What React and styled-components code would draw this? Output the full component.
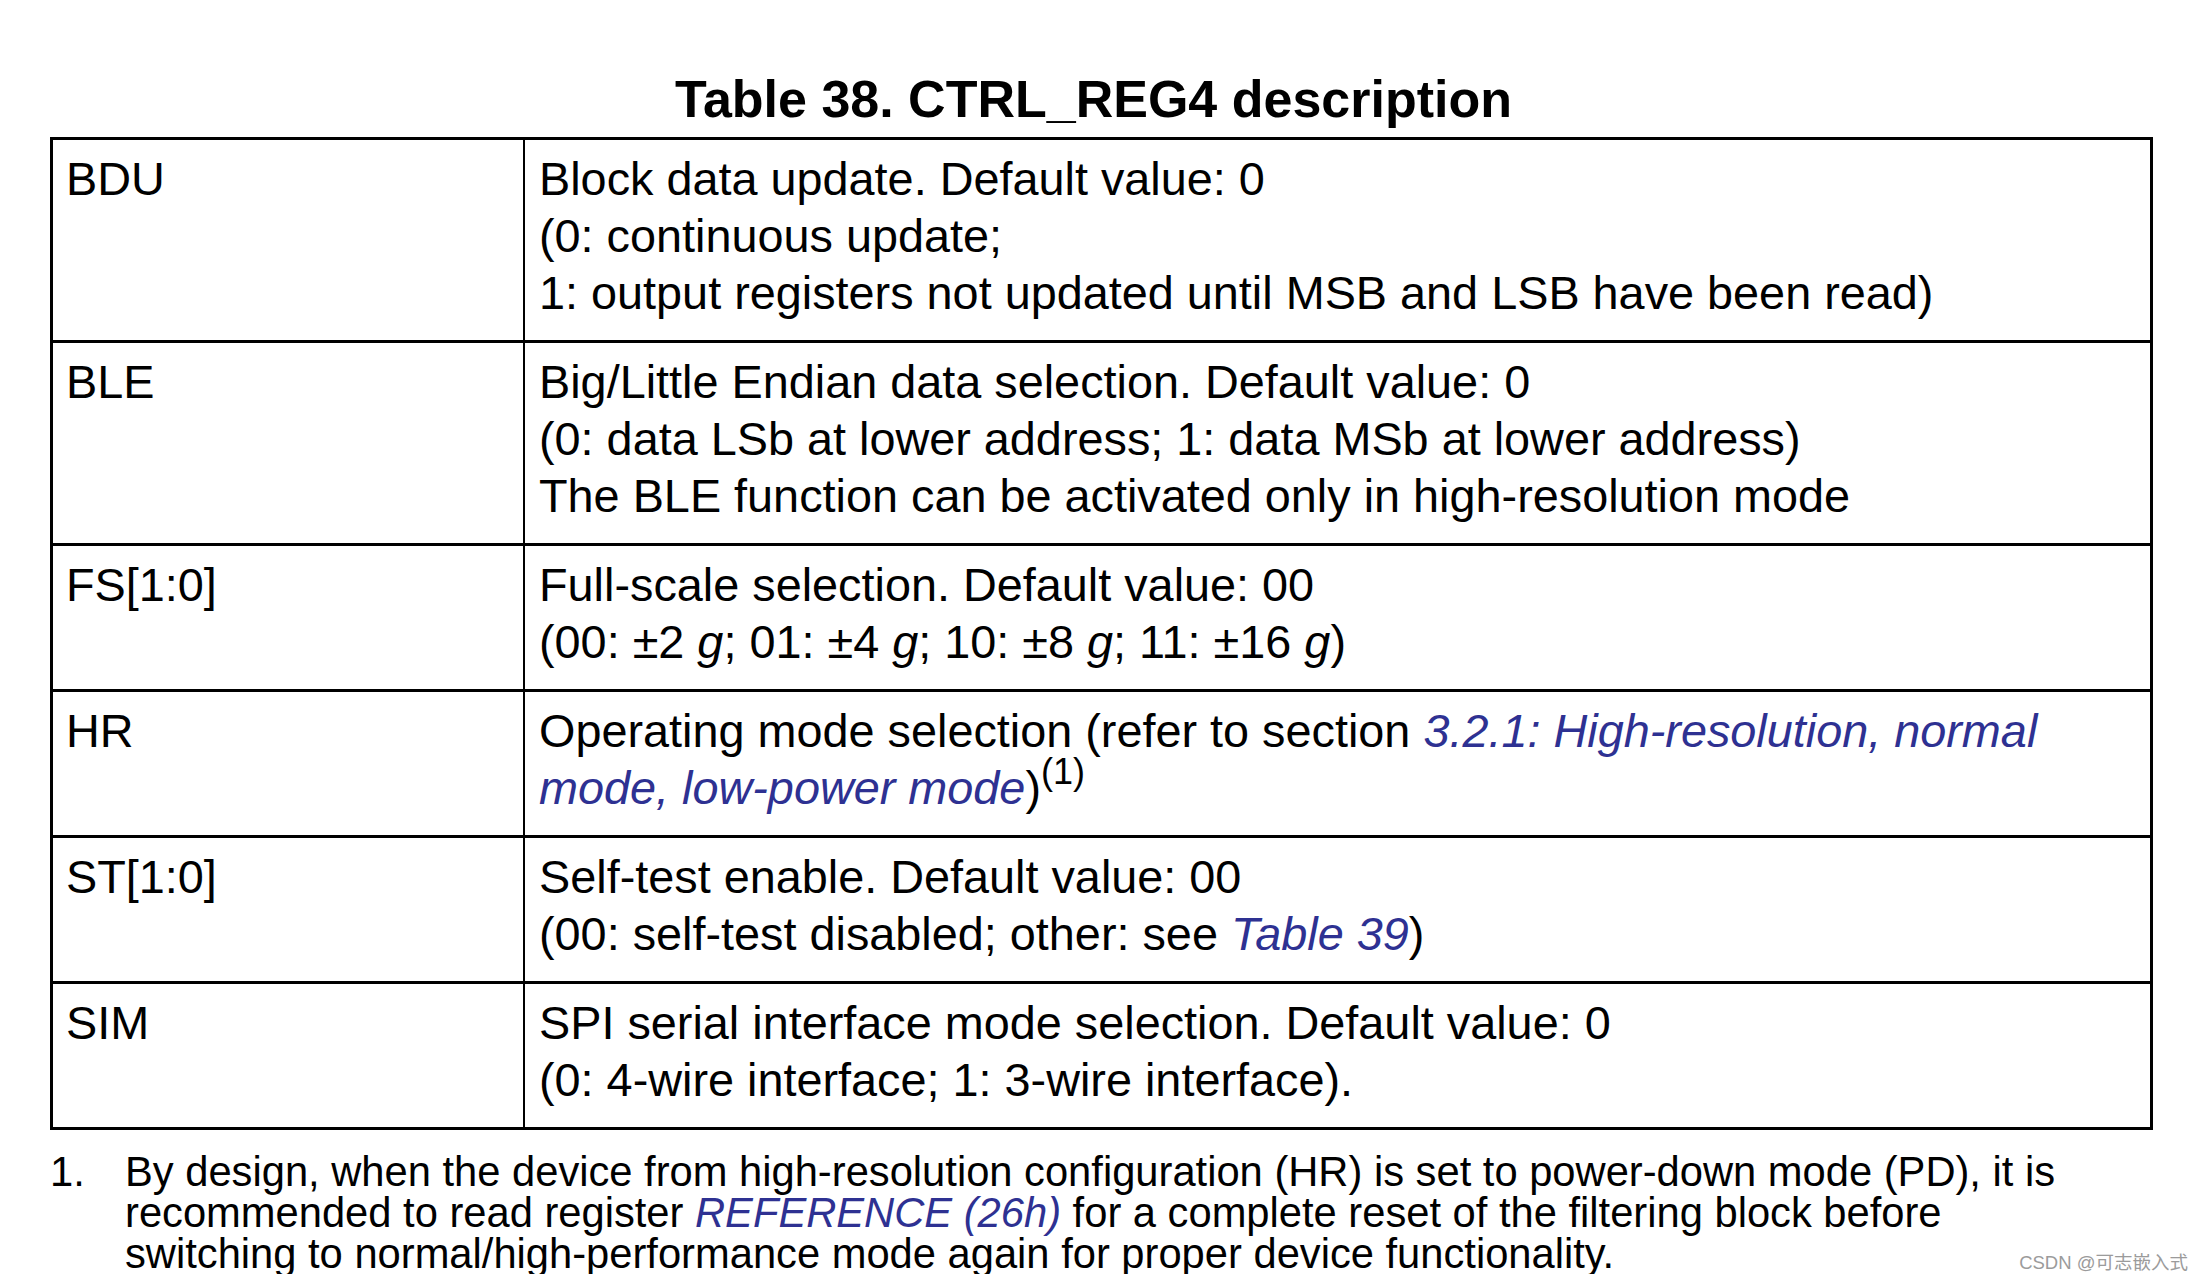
import React from "react";
import styled, { createGlobalStyle } from "styled-components";

const GlobalStyle = createGlobalStyle`
  html, body {
    margin: 0;
    padding: 0;
    background: #ffffff;
  }
  body {
    font-family: "Liberation Sans", Arial, sans-serif;
    color: #000000;
  }
`;

const Page = styled.div`
  width: 2103px;
  padding: 69px 0 0 50px;
`;

const Title = styled.div`
  font-size: 52px;
  font-weight: bold;
  line-height: 60px;
  text-align: center;
  padding-right: 16px;
  margin-bottom: 8px;
`;

const RegTable = styled.table`
  width: 100%;
  table-layout: fixed;
  border-collapse: separate;
  border-spacing: 0;
  border: 3px solid #000;
`;

const Row = styled.tr`
  td {
    border-top: ${(p) => (p.$first ? "none" : "3px solid #000")};
  }
`;

const Cell = styled.td`
  vertical-align: top;
  padding: 11px 13px 18px;
  font-size: 46.8px;
  line-height: 57px;
  white-space: nowrap;
`;

const NameCell = styled(Cell)`
  border-right: 2px solid #000;
`;

const DescCell = styled(Cell)`
  padding-left: 14px;
`;

const Line = styled.div``;

const Link = styled.span`
  font-style: italic;
  color: #2e3192;
`;

const Italic = styled.span`
  font-style: italic;
`;

const Sup = styled.span`
  font-size: 36px;
  line-height: 0;
  vertical-align: 20px;
`;

const Footnote = styled.div`
  display: flex;
  margin-top: 21px;
  font-size: 41.7px;
  line-height: 41px;
`;

const FootNum = styled.div`
  width: 75px;
  flex: none;
`;

const FootText = styled.div`
  white-space: nowrap;
`;

const Watermark = styled.div`
  position: absolute;
  right: 16px;
  top: 1248px;
  font-family: "Liberation Sans", "Noto Sans CJK SC", sans-serif;
  font-size: 18.5px;
  color: #9b9b9b;
  text-shadow: 0 0 1px #ffffff;
`;

const rows = [
  {
    name: "BDU",
    lines: [
      "Block data update. Default value: 0",
      "(0: continuous update;",
      "1: output registers not updated until MSB and LSB have been read)",
    ],
  },
  {
    name: "BLE",
    lines: [
      "Big/Little Endian data selection. Default value: 0",
      "(0: data LSb at lower address; 1: data MSb at lower address)",
      "The BLE function can be activated only in high-resolution mode",
    ],
  },
  {
    name: "FS[1:0]",
    lines: [
      "Full-scale selection. Default value: 00",
      <>
        (00: ±2 <Italic>g</Italic>; 01: ±4 <Italic>g</Italic>; 10: ±8{" "}
        <Italic>g</Italic>; 11: ±16 <Italic>g</Italic>)
      </>,
    ],
  },
  {
    name: "HR",
    lines: [
      <>
        Operating mode selection (refer to section{" "}
        <Link>3.2.1: High-resolution, normal</Link>
      </>,
      <>
        <Link>mode, low-power mode</Link>)<Sup>(1)</Sup>
      </>,
    ],
  },
  {
    name: "ST[1:0]",
    lines: [
      "Self-test enable. Default value: 00",
      <>
        (00: self-test disabled; other: see <Link>Table 39</Link>)
      </>,
    ],
  },
  {
    name: "SIM",
    lines: [
      "SPI serial interface mode selection. Default value: 0",
      "(0: 4-wire interface; 1: 3-wire interface).",
    ],
  },
];

function App() {
  return (
    <>
      <GlobalStyle />
      <Page>
        <Title>Table 38. CTRL_REG4 description</Title>
        <RegTable>
          <colgroup>
            <col style={{ width: 472 }} />
            <col />
          </colgroup>
          <tbody>
            {rows.map((row, idx) => (
              <Row key={row.name} $first={idx === 0}>
                <NameCell>{row.name}</NameCell>
                <DescCell>
                  {row.lines.map((line, i) => (
                    <Line key={i}>{line}</Line>
                  ))}
                </DescCell>
              </Row>
            ))}
          </tbody>
        </RegTable>
        <Footnote>
          <FootNum>1.</FootNum>
          <FootText>
            By design, when the device from high-resolution configuration (HR)
            is set to power-down mode (PD), it is
            <br />
            recommended to read register <Link>REFERENCE (26h)</Link> for a
            complete reset of the filtering block before
            <br />
            switching to normal/high-performance mode again for proper device
            functionality.
          </FootText>
        </Footnote>
      </Page>
      <Watermark>CSDN @可志嵌入式</Watermark>
    </>
  );
}

export default App;
